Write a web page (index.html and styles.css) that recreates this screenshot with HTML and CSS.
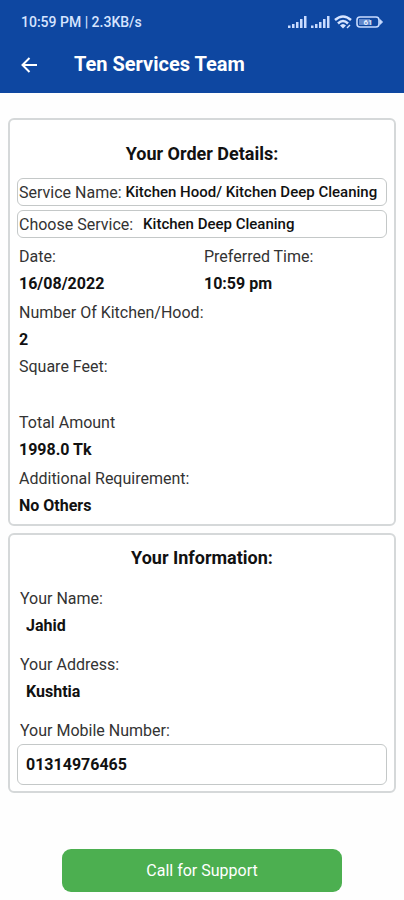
FILE: index.html
```html
<!doctype html>
<html lang="en">
    <head>
        <meta charset="UTF-8" />
        <meta name="viewport" content="width=device-width, initial-scale=1.0" />
        <title>Ten Services Team</title>
        <link rel="stylesheet" href="styles.css">
    </head>
    <body>
        <header class="header">
            <div class="status-bar">
                <span>10:59 PM | 2.3KB/s</span>
                <div class="status-icons">
                    <svg width="19" height="12" viewBox="0 0 19 12" fill="#c9dcff">
                        <path d="M0 9.500h2.500V12H0zM4 8h2.500v4H4zM8 6h2.500v6H8zM12 3h2.500v9h-2.500zM16 0h2.500v12h-2.500z" />
                    </svg>
                    <svg width="19" height="12" viewBox="0 0 19 12" fill="#c9dcff">
                        <path d="M0 9.500h2.500V12H0zM4 8h2.500v4H4zM8 6h2.500v6H8zM12 3h2.500v9h-2.500zM16 0h2.500v12h-2.500z" />
                    </svg>
                    <svg width="18" height="14" viewBox="0 0 18 14" fill="none" stroke="#d6e4ff" stroke-width="2.500">
                        <path d="M1 5Q9 -2 17 5M4 8.500Q9 3.500 14 8.500" />
                        <path d="M6 10.500Q9 7.500 12 10.500L9 13.500Z" fill="#d6e4ff" stroke="none" />
                        <path d="M13 13l3-3" stroke-width="1.5" />
                    </svg>
                    <svg width="27" height="12" viewBox="0 0 27 12" fill="none" stroke="#c9dcff">
                        <rect x="1" y="1" width="22" height="10" rx="3" stroke-width="1.6" />
                        <path d="M24 3.5l2.500 2.500-2.500 2.500z" fill="#c9dcff" />
                        <rect x="3" y="3" width="11" height="6" fill="#5f86cb" stroke="none" />
                        <text x="12" y="9" class="battery-text">61</text>
                    </svg>
                </div>
            </div>
            <div class="toolbar">
                <button type="button" class="back-button" aria-label="Back">
                    <svg width="18" height="18" viewBox="0 0 18 18" fill="none" stroke="#fff" stroke-width="2">
                        <path d="M17 9H3M9.500 2L2.500 9L9.500 16" />
                    </svg>
                </button>
                <h1>Ten Services Team</h1>
            </div>
        </header>

        <main class="content">
            <section class="card order-card">
                <h2>Your Order Details:</h2>

                <div class="service-row">
                    <span>Service Name:</span>
                    <strong>Kitchen Hood/ Kitchen Deep Cleaning</strong>
                </div>
                <div class="service-row wide-gap">
                    <span>Choose Service:</span>
                    <strong>Kitchen Deep Cleaning</strong>
                </div>

                <div class="detail-columns">
                    <div class="detail">
                        <span>Date:</span>
                        <strong>16/08/2022</strong>
                    </div>
                    <div class="detail">
                        <span>Preferred Time:</span>
                        <strong>10:59 pm</strong>
                    </div>
                </div>
                <div class="detail compact">
                    <span>Number Of Kitchen/Hood:</span>
                    <strong>2</strong>
                </div>
                <div class="detail">
                    <span>Square Feet:</span>
                    <strong></strong>
                </div>
                <div class="detail">
                    <span>Total Amount</span>
                    <strong>1998.0 Tk</strong>
                </div>
                <div class="detail">
                    <span>Additional Requirement:</span>
                    <strong>No Others</strong>
                </div>
            </section>

            <section class="card info-card">
                <h2>Your Information:</h2>

                <div class="form-group">
                    <label for="name">Your Name:</label>
                    <input type="text" id="name" name="name" value="Jahid" readonly />
                </div>
                <div class="form-group">
                    <label for="address">Your Address:</label>
                    <input type="text" id="address" name="address" value="Kushtia" readonly />
                </div>
                <div class="form-group">
                    <label for="mobile">Your Mobile Number:</label>
                    <input type="tel" id="mobile" name="mobile" class="outlined" value="01314976465" />
                </div>
            </section>

            <button type="button" class="support-button">Call for Support</button>
        </main>
    </body>
</html>
```
FILE: styles.css
```css
/* General Styles */
* {
    box-sizing: border-box;
}

body {
    font-family: Roboto, "Liberation Sans", sans-serif;
    font-size: 16px;
    line-height: 27px;
    margin: 0;
    color: #111;
    background-color: #fefefe;
}

/* Header */
.header {
    background-color: #0e47a1;
    color: white;
    padding: 12px 20px 2px;
}

.status-bar {
    display: flex;
    justify-content: space-between;
    align-items: center;
    height: 20px;
    padding: 0 1px;
    font-size: 14px;
    font-weight: 500;
    color: #d6e4ff;
}

.status-icons {
    display: flex;
    align-items: center;
    gap: 4px;
}

.battery-text {
    font-size: 8px;
    font-weight: 700;
    fill: #e6efff;
    stroke: none;
    text-anchor: middle;
}

.toolbar {
    display: flex;
    align-items: center;
    gap: 36px;
    height: 53px;
    margin-top: 6px;
}

.back-button {
    display: flex;
    padding: 0;
    border: none;
    background: none;
    cursor: pointer;
}

.toolbar h1 {
    margin: 0;
    font-size: 20px;
    font-weight: 700;
}

/* Cards */
.content {
    padding: 25px 8px 8px;
}

.card {
    padding: 0 7px;
    border: 2px solid #d5d8d9;
    border-radius: 6px;
    margin-bottom: 7px;
    background-color: white;
}

.card h2 {
    margin: 0;
    font-size: 18px;
    font-weight: 700;
    text-align: center;
}

.order-card {
    padding-top: 20px;
    padding-bottom: 3px;
}

.order-card h2 {
    margin-bottom: 11px;
}

.service-row {
    display: flex;
    align-items: center;
    gap: 4px;
    height: 28px;
    margin-bottom: 4px;
    padding: 0 1px;
    border: 1px solid #c4c8c8;
    border-radius: 6px;
    white-space: nowrap;
}

.service-row strong {
    font-size: 15px;
    font-weight: 500;
}

.wide-gap {
    gap: 10px;
}

.detail-columns {
    display: grid;
    grid-template-columns: 1fr 1fr;
    margin-top: 5px;
}

.detail {
    display: flex;
    flex-direction: column;
    margin-bottom: 2px;
    padding: 0 2px;
}

.compact {
    margin-bottom: 0;
}

.detail strong {
    min-height: 27px;
}

span,
label {
    color: #333;
}

.status-bar span {
    color: inherit;
}

strong {
    font-weight: 700;
}

/* Customer form */
.info-card {
    padding-top: 9px;
    padding-bottom: 6px;
}

.info-card h2 {
    margin-bottom: 14px;
}

.form-group {
    margin-bottom: 12px;
}

.form-group:last-child {
    margin-bottom: 0;
}

.form-group label {
    display: block;
    padding-left: 3px;
}

.form-group input {
    display: block;
    width: 100%;
    height: 27px;
    padding: 0 8px;
    border: 1px solid transparent;
    border-radius: 6px;
    background: none;
    font-family: inherit;
    font-size: 16px;
    font-weight: 700;
    color: #111;
}

.form-group .outlined {
    height: 41px;
    border-color: #c4c8c8;
}

.support-button {
    display: block;
    width: 72%;
    height: 43px;
    margin: 56px auto 0;
    border: none;
    border-radius: 9px;
    background-color: #4caf50;
    color: white;
    font-family: inherit;
    font-size: 16px;
    cursor: pointer;
}
```
